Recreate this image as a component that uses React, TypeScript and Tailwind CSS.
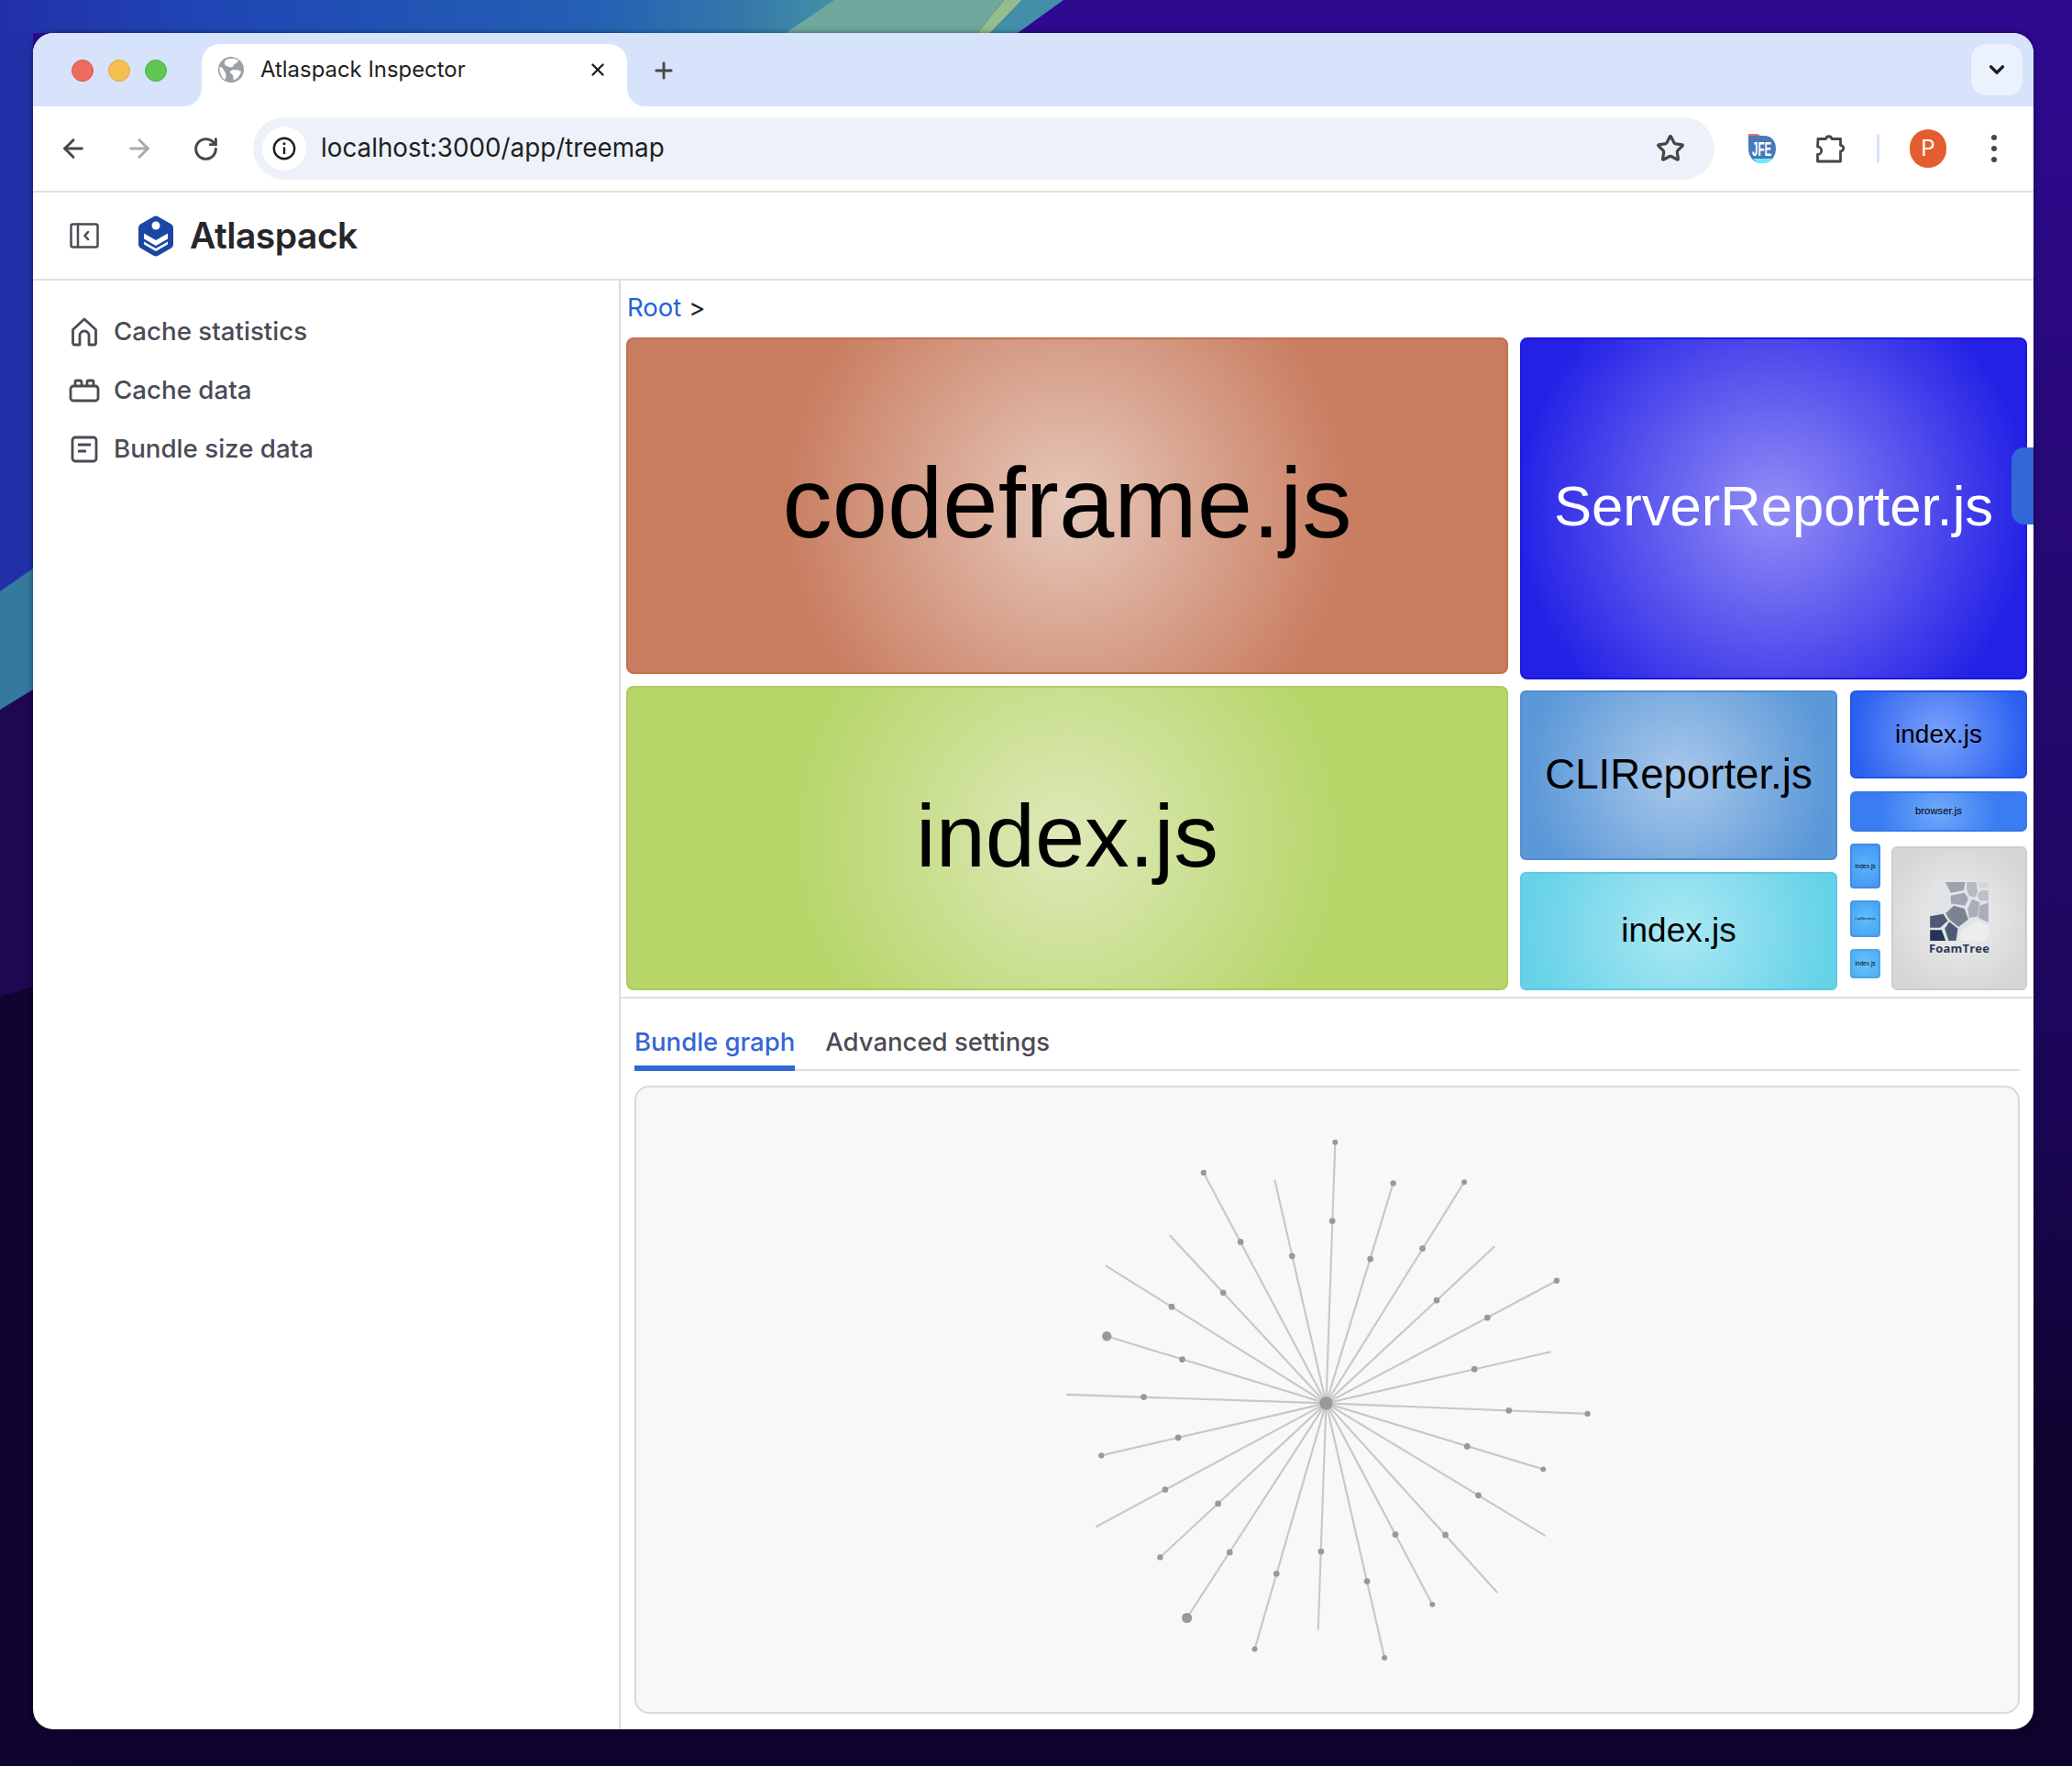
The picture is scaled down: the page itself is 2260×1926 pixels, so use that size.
import React from 'react';
import { ArrowLeft, ArrowRight, ChevronDown, Plus, RotateCw, Star, X } from 'lucide-react';

// [end x, end y, mid x, mid y, end dot radius] in the drawing's own 1568 units
const SPOKES: number[][] = [
  [800, 65, 792, 282, 7.5],
  [960, 178, 897, 387, 8],
  [1156, 175, 1041, 358, 7.5],
  [1240, 352, 1080, 501, 0],
  [1411, 447, 1220, 549, 8],
  [1395, 643, 1184, 691, 0],
  [1496, 814, 1279, 805, 8],
  [1374, 967, 1164, 904, 7.5],
  [1380, 1151, 1195, 1039, 0],
  [1247, 1307, 1104, 1148, 0],
  [1068, 1340, 966, 1147, 7.5],
  [936, 1487, 888, 1276, 7.5],
  [753, 1410, 761, 1194, 0],
  [578, 1463, 638, 1255, 7.5],
  [391, 1377, 509, 1196, 14],
  [317, 1210, 477, 1062, 8],
  [140, 1126, 331, 1023, 0],
  [155, 929, 367, 880, 8],
  [58, 761, 272, 768, 0],
  [170, 600, 378, 664, 13],
  [166, 405, 349, 519, 0],
  [343, 321, 491, 480, 0],
  [437, 149, 539, 340, 8],
  [633, 168, 681, 379, 0],
];

const FOAM_CELLS: [string, string][] = [
  ['50,0 115,0 110,27 68,35', '#9ca3af'],
  ['120,0 150,0 156,32 146,50 128,44 120,22', '#b4b9c2'],
  ['153,0 191,0 191,20 163,20', '#d4d7dc'],
  ['153,42 168,27 191,27 191,62 163,60', '#bcc0c8'],
  ['68,44 113,35 125,54 115,77 68,70', '#a0a6b1'],
  ['123,87 138,56 163,67 156,112 128,117', '#a9afb9'],
  ['51,102 78,77 113,87 125,122 93,147 63,122', '#7c8494'],
  ['163,77 191,67 191,132 158,117', '#a8aeb9'],
  ['0,112 43,104 58,127 33,149 0,149', '#4e5b74'],
  ['0,157 38,157 51,192 0,192', '#233556'],
  ['48,152 63,130 91,152 85,192 61,192', '#4e5b74'],
];

function Wallpaper() {
  return (
    <svg className="absolute inset-0" width="2260" height="1926" viewBox="0 0 2260 1926">
      <defs>
        <linearGradient id="blueSweep" x1="0" y1="0" x2="1" y2="0">
          <stop offset="0" stopColor="#2230a8" />
          <stop offset="0.25" stopColor="#1f46b4" />
          <stop offset="0.7" stopColor="#2460b4" />
          <stop offset="0.88" stopColor="#3478aa" />
          <stop offset="1" stopColor="#4593a6" />
        </linearGradient>
        <linearGradient id="purpleSweep" x1="0" y1="0" x2="0" y2="1">
          <stop offset="0" stopColor="#2e0a90" />
          <stop offset="0.38" stopColor="#25086f" />
          <stop offset="0.62" stopColor="#1b0658" />
          <stop offset="0.82" stopColor="#0f0330" />
          <stop offset="1" stopColor="#0e032c" />
        </linearGradient>
      </defs>
      <rect width="2260" height="1926" fill="url(#purpleSweep)" />
      <polygon points="0,774 36,752 36,1076 0,1087" fill="#1e0852" />
      <polygon points="0,1087 36,1076 80,1076 80,1926 0,1926" fill="#100430" />
      <polygon points="0,0 920,0 860,36 36,36 36,620 0,645" fill="url(#blueSweep)" />
      <rect x="0" y="36" width="36" height="610" fill="#2230a8" />
      <polygon points="0,645 36,620 36,752 0,774" fill="#35799f" />
      <polygon points="910,0 1095,0 1066,36 857,36" fill="#6fa89c" />
      <polygon points="1095,0 1115,0 1080,36 1066,36" fill="#94bd8e" />
      <polygon points="1115,0 1160,0 1110,36 1080,36" fill="#438ea8" />
    </svg>
  );
}

function SidebarToggleIcon() {
  return (
    <svg width="32" height="28" viewBox="0 0 32 28" fill="none" stroke="#4b4b55" strokeWidth="2.5" strokeLinecap="round" strokeLinejoin="round">
      <rect x="1.5" y="1.5" width="29" height="25" rx="2" />
      <path d="M9 1.5v25" />
      <path d="M20 10l-3.5 4 3.5 4" />
    </svg>
  );
}

function AtlaspackLogo() {
  return (
    <svg width="38" height="45" viewBox="0 0 38 45">
      <path d="M16.5 1.2a5 5 0 0 1 5 0L35.5 9.2a5 5 0 0 1 2.5 4.3V31.5a5 5 0 0 1-2.5 4.3L21.5 43.8a5 5 0 0 1-5 0L2.5 35.8A5 5 0 0 1 0 31.5V13.5a5 5 0 0 1 2.5-4.3Z" fill="#1a47a3" />
      <circle cx="19" cy="11" r="4.5" fill="#ffffff" />
      <path d="M6 19.5L19 27L32 19.5V25.5L19 33L6 25.5Z" fill="#ffffff" />
      <path d="M6 28.5L19 36L32 28.5V31.5L19 39L6 31.5Z" fill="#ffffff" />
    </svg>
  );
}

function HomeIcon() {
  return (
    <svg width="30" height="32" viewBox="0 0 30 32" fill="none" stroke="#4b4b55" strokeWidth="2.8" strokeLinejoin="round">
      <path d="M2.5 13.5L15 2l12.5 11.5V28a2 2 0 0 1-2 2H20V20a5 5 0 0 0-10 0v10H4.500a2 2 0 0 1-2-2Z" />
    </svg>
  );
}

function BlockIcon() {
  return (
    <svg width="34" height="26" viewBox="0 0 34 26" fill="none" stroke="#4b4b55" strokeWidth="2.8" strokeLinejoin="round">
      <rect x="2" y="8" width="30" height="16" rx="3" />
      <path d="M7 8V3.500a1.500 1.500 0 0 1 1.500-1.500h4a1.500 1.500 0 0 1 1.500 1.500V8" />
      <path d="M20 8V3.500a1.500 1.500 0 0 1 1.500-1.500h4a1.500 1.500 0 0 1 1.500 1.500V8" />
    </svg>
  );
}

function FileIcon() {
  return (
    <svg width="30" height="30" viewBox="0 0 30 30" fill="none" stroke="#4b4b55" strokeWidth="2.8" strokeLinejoin="round">
      <rect x="2" y="2" width="26" height="26" rx="3" />
      <path d="M8 10h14M8 17h9" />
    </svg>
  );
}

function GlobeIcon() {
  return (
    <svg width="28" height="28" viewBox="0 0 28 28">
      <circle cx="14" cy="14" r="14" fill="#9aa0a6" />
      <path d="M10 2.500C14 1 19 1.500 22 4c-1 3-4 3-5 5s-3 3-5 2-4-1-5-3 1-4.500 3-5.500Z" fill="#ffffff" />
      <path d="M14 15c3-2 8-1 11 1-1 4-4 8-8 9.500-1-3 0-5-2-6.500s-3-2.500-1-4Z" fill="#ffffff" />
      <path d="M1.500 11c2 0 4 2 5 4s2 3 2 5-.5 4-1.500 5C3.500 22 1 17 1.500 11Z" fill="#ffffff" />
    </svg>
  );
}

function InfoIcon() {
  return (
    <svg width="26" height="26" viewBox="0 0 26 26" fill="none" stroke="#1f1f1f" strokeWidth="2.4">
      <circle cx="13" cy="13" r="11.200" />
      <path d="M13 11.500v7.500" />
      <circle cx="13" cy="7.800" r="1.500" fill="#1f1f1f" stroke="none" />
    </svg>
  );
}

function JfeIcon() {
  return (
    <svg width="32" height="32" viewBox="0 0 32 32">
      <path d="M1 0h9c2 0 4 1 4 3H1Z" fill="#e0706c" />
      <path d="M1 2h17c8 0 13 6 13 14s-5 16-15 16C7 32 1 25 1 16Z" fill="#4a78b8" />
      <path d="M6 27h22c-3 3-7 5-12 5-4 0-7-2-10-5Z" fill="#66f0fa" />
      <text transform="translate(5 24) scale(0.72 1.4)" fontFamily="'Liberation Sans', sans-serif" fontSize="16" fontWeight="700" fill="#ffffff">JFE</text>
    </svg>
  );
}

function PuzzleIcon() {
  return (
    <svg width="34" height="34" viewBox="0 0 34 34" fill="none" stroke="#444746" strokeWidth="2.8" strokeLinejoin="round">
      <path d="M3 6.500h8.500a3.300 3.300 0 0 1 6.500 0H27.500V13.500a3.200 3.200 0 0 1 0 6.500V31H2.500V23.500a4 4 0 0 0 0-8.500Z" />
    </svg>
  );
}

function FoamTreeLogo() {
  return (
    <div className="flex flex-col items-center">
      <svg width="64" height="64" viewBox="0 0 191 192">
        <rect width="191" height="192" rx="18" fill="#e1e3e7" />
        <polygon points="98,192 103,157 158,127 191,142 191,175 178,192" fill="#ebedef" />
        {FOAM_CELLS.map(([points, fill]) => (
          <polygon key={points} points={points} fill={fill} />
        ))}
      </svg>
      <span className="font-['Open_Sans',sans-serif] text-[13px] leading-[16px] font-bold tracking-[0.2px] text-[#26395c]">FoamTree</span>
    </div>
  );
}

function BundleGraph() {
  return (
    <svg width="620" height="620" viewBox="0 0 1568 1568">
      {SPOKES.map(([x, y]) => (
        <line key={`${x}-${y}`} x1="775" y1="785" x2={x} y2={y} stroke="#c8c8c8" strokeWidth="5.500" />
      ))}
      {SPOKES.map(([x, y, mx, my, r]) => (
        <g key={`${x}-${y}-dots`} fill="#999999">
          <circle cx={mx} cy={my} r="8.500" />
          {r > 0 && <circle cx={x} cy={y} r={r} />}
        </g>
      ))}
      <circle cx="775" cy="785" r="18" fill="#999999" />
    </svg>
  );
}

export default function App() {
  return (
    <div className="relative h-[1926px] w-[2260px] overflow-hidden font-['Inter',sans-serif]">
      <Wallpaper />

      <div className="absolute top-[36px] left-[36px] flex h-[1850px] w-[2182px] flex-col overflow-hidden rounded-[22px] bg-white shadow-[0_0_6px_rgba(0,0,0,0.45)]">
        {/* Tab strip */}
        <div className="flex h-[80px] shrink-0 bg-[#d7e3fb]">
          <div className="flex w-[184px] items-center gap-[16px] pt-[2px] pl-[42px]">
            <span className="h-[24px] w-[24px] rounded-full border border-[#d9534c] bg-[#ef6a5f]" />
            <span className="h-[24px] w-[24px] rounded-full border border-[#dfa73e] bg-[#f6bf4f]" />
            <span className="h-[24px] w-[24px] rounded-full border border-[#4fb046] bg-[#61c554]" />
          </div>

          <div className="relative mt-[12px] flex h-[68px] w-[464px] items-center rounded-t-[20px] bg-white pb-[12px] pl-[18px]">
            <div className="absolute bottom-0 -left-[20px] h-[20px] w-[20px] bg-white">
              <div className="h-full w-full rounded-br-[20px] bg-[#d7e3fb]" />
            </div>
            <div className="absolute -right-[20px] bottom-0 h-[20px] w-[20px] bg-white">
              <div className="h-full w-full rounded-bl-[20px] bg-[#d7e3fb]" />
            </div>
            <GlobeIcon />
            <span className="ml-[18px] text-[23.900px] text-[#1f1f1f]">Atlaspack Inspector</span>
            <X className="absolute top-[17px] right-[21px]" size={22} strokeWidth={2.6} color="#1f1f1f" />
          </div>

          <div className="flex w-[80px] items-center justify-center pt-[2px]">
            <Plus size={28} strokeWidth={2.4} color="#444746" />
          </div>

          <div className="flex-1" />

          <div className="mt-[12px] mr-[12px] flex h-[56px] w-[56px] items-center justify-center rounded-[16px] bg-[#ecf2fd]">
            <ChevronDown size={26} strokeWidth={3} color="#1f1f1f" />
          </div>
        </div>

        {/* Toolbar */}
        <div className="flex h-[92px] shrink-0 items-center rounded-t-[20px] bg-white">
          <div className="flex w-[240px] items-center">
            <div className="ml-[26px] flex w-[36px] justify-center">
              <ArrowLeft size={32} strokeWidth={2.200} color="#474747" />
            </div>
            <div className="ml-[36px] flex w-[36px] justify-center">
              <ArrowRight size={32} strokeWidth={2.200} color="#aaaaaa" />
            </div>
            <div className="ml-[36px] flex w-[36px] justify-center">
              <RotateCw size={29} strokeWidth={2.400} color="#474747" />
            </div>
          </div>

          <div className="flex h-[68px] w-[1594px] items-center rounded-full bg-[#edf2fa] pl-[10px]">
            <div className="flex h-[48px] w-[48px] items-center justify-center rounded-full bg-white">
              <InfoIcon />
            </div>
            <span className="ml-[16px] text-[27.800px] text-[#1f1f1f]">localhost:3000/app/treemap</span>
            <div className="flex-1" />
            <Star className="mr-[32px]" size={32} strokeWidth={2.400} color="#444746" />
          </div>

          <div className="ml-[36px] flex items-center">
            <JfeIcon />
            <div className="ml-[42px]">
              <PuzzleIcon />
            </div>
            <div className="ml-[33px] h-[32px] w-[3px] rounded-full bg-[#d3e3fd]" />
            <div className="ml-[33px] flex h-[42px] w-[40px] items-center justify-center rounded-full bg-[#e35d30] text-[24px] text-white">P</div>
            <div className="ml-[49px] flex flex-col gap-[6px]">
              <span className="h-[6px] w-[6px] rounded-full bg-[#444746]" />
              <span className="h-[6px] w-[6px] rounded-full bg-[#444746]" />
              <span className="h-[6px] w-[6px] rounded-full bg-[#444746]" />
            </div>
          </div>
        </div>

        {/* App header */}
        <div className="flex h-[98px] shrink-0 items-center border-y-2 border-[#e0e0e0]">
          <div className="ml-[40px] flex">
            <SidebarToggleIcon />
          </div>
          <div className="ml-[43px] flex">
            <AtlaspackLogo />
          </div>
          <span className="ml-[18px] text-[39px] font-semibold tracking-[-0.5px] text-[#26262b]">Atlaspack</span>
        </div>

        <div className="flex min-h-0 flex-1">
          {/* Sidebar */}
          <aside className="w-[641px] shrink-0 border-r-2 border-[#dcdcdc] pt-[24px]">
            <div className="flex h-[64px] items-center">
              <div className="ml-[39px] flex w-[34px] justify-center"><HomeIcon /></div>
              <span className="ml-[15px] text-[27.700px] font-medium text-[#4b4b55]">Cache statistics</span>
            </div>
            <div className="flex h-[64px] items-center">
              <div className="ml-[39px] flex w-[34px] justify-center"><BlockIcon /></div>
              <span className="ml-[15px] text-[27.700px] font-medium text-[#4b4b55]">Cache data</span>
            </div>
            <div className="flex h-[64px] items-center">
              <div className="ml-[39px] flex w-[34px] justify-center"><FileIcon /></div>
              <span className="ml-[15px] text-[27.700px] font-medium text-[#4b4b55]">Bundle size data</span>
            </div>
          </aside>

          <main className="relative flex min-w-0 flex-1 flex-col">
            <div className="flex h-[62px] shrink-0 items-center pb-[3px] pl-[7px] text-[27.500px] text-[#1f1f1f]">
              <span className="text-[#2563d8]">Root</span>
              <span className="ml-[8px]">&gt;</span>
            </div>

            {/* Treemap */}
            <div className="flex h-[712px] shrink-0 gap-[13px] pl-[6px] font-['Liberation_Sans',Arial,sans-serif]">
              <div className="flex w-[962px] flex-col gap-[13px]">
                <div className="flex h-[367px] items-center justify-center rounded-[8px] border-2 border-[#c4704f] bg-[radial-gradient(circle_310px_at_center,#e6c8ba_0%,#c97d60_100%)] pb-[4px] text-[108.500px] text-black">codeframe.js</div>
                <div className="flex h-[332px] items-center justify-center rounded-[8px] border-2 border-[#aecb5e] bg-[radial-gradient(circle_300px_at_center,#dfe9ba_0%,#b6d669_100%)] pb-[4px] text-[97.300px] text-black">index.js</div>
              </div>

              <div className="flex w-[553px] flex-col">
                <div className="flex h-[373px] items-center justify-center rounded-[8px] border-2 border-[#1a17de] bg-[radial-gradient(circle_280px_at_center,#938ef6_0%,#2421e6_100%)] pb-[4px] text-[61.600px] text-white">ServerReporter.js</div>

                <div className="mt-[12px] flex h-[327px] gap-[14px]">
                  <div className="flex w-[346px] flex-col gap-[13px]">
                    <div className="flex h-[185px] items-center justify-center rounded-[6px] border-2 border-[#4f8dd0] bg-[radial-gradient(circle_165px_at_center,#a8c8ea_0%,#5b98d8_100%)] text-[45.600px] text-black">CLIReporter.js</div>
                    <div className="flex h-[129px] items-center justify-center rounded-[6px] border-2 border-[#5ccbe2] bg-[radial-gradient(circle_165px_at_center,#aae8f3_0%,#66d2e8_100%)] pb-[2px] text-[37px] text-black">index.js</div>
                  </div>

                  <div className="flex w-[193px] flex-col">
                    <div className="flex h-[96px] items-center justify-center rounded-[6px] border-2 border-[#2356dc] bg-[radial-gradient(circle_95px_at_center,#7aa3fc_0%,#2a5ff0_100%)] text-[28px] text-black">index.js</div>
                    <div className="mt-[14px] flex h-[44px] items-center justify-center rounded-[6px] border-2 border-[#3a78ea] bg-[radial-gradient(circle_65px_at_center,#6ea9fb_0%,#3a7cf2_100%)] pb-[1px] text-[11.300px] text-black">browser.js</div>

                    <div className="mt-[13px] flex gap-[12px]">
                      <div className="flex w-[33px] flex-col">
                        <div className="flex h-[49px] items-center justify-center rounded-[4px] border-2 border-[#3f8ae6] bg-[radial-gradient(circle_28px_at_center,#5cb4fc_0%,#3f96f0_100%)] text-[6.600px] text-black">index.js</div>
                        <div className="mt-[13px] flex h-[40px] items-center justify-center rounded-[4px] border-2 border-[#459be6] bg-[radial-gradient(circle_25px_at_center,#62bdfc_0%,#44a0f0_100%)] text-[4px] text-black">LspServer.js</div>
                        <div className="mt-[13px] flex h-[32px] items-center justify-center rounded-[4px] border-2 border-[#4ba8e8] bg-[radial-gradient(circle_22px_at_center,#68c4fc_0%,#4caaf2_100%)] text-[6.600px] text-black">index.js</div>
                      </div>
                      <div className="mt-[3px] flex h-[157px] w-[148px] items-center justify-center rounded-[6px] border-2 border-[#cccccc] bg-[radial-gradient(circle_85px_at_center,#efefef_0%,#d6d6d6_100%)]">
                        <FoamTreeLogo />
                      </div>
                    </div>
                  </div>
                </div>
              </div>
            </div>

            <div className="absolute top-[182px] right-0 h-[84px] w-[24px] rounded-l-[14px] bg-[#3366d6]" />

            {/* Tabs and graph */}
            <div className="mt-[7px] flex min-h-0 flex-1 flex-col border-t-2 border-[#e0e0e0] px-[15px]">
              <div className="flex h-[79px] shrink-0 items-end gap-[33px] border-b-2 border-[#dedede]">
                <div className="-mb-[2px] border-b-[6px] border-[#3366d6] pb-[5px] text-[27.500px] font-medium text-[#3366d6]">Bundle graph</div>
                <div className="pb-[9px] text-[27.500px] font-medium text-[#4b4b55]">Advanced settings</div>
              </div>
              <div className="mt-[16px] h-[685px] shrink-0 rounded-[16px] border-2 border-[#d9d9d9] bg-[#f8f8f8] pt-[34px] pl-[446px]">
                <BundleGraph />
              </div>
            </div>
          </main>
        </div>
      </div>
    </div>
  );
}
